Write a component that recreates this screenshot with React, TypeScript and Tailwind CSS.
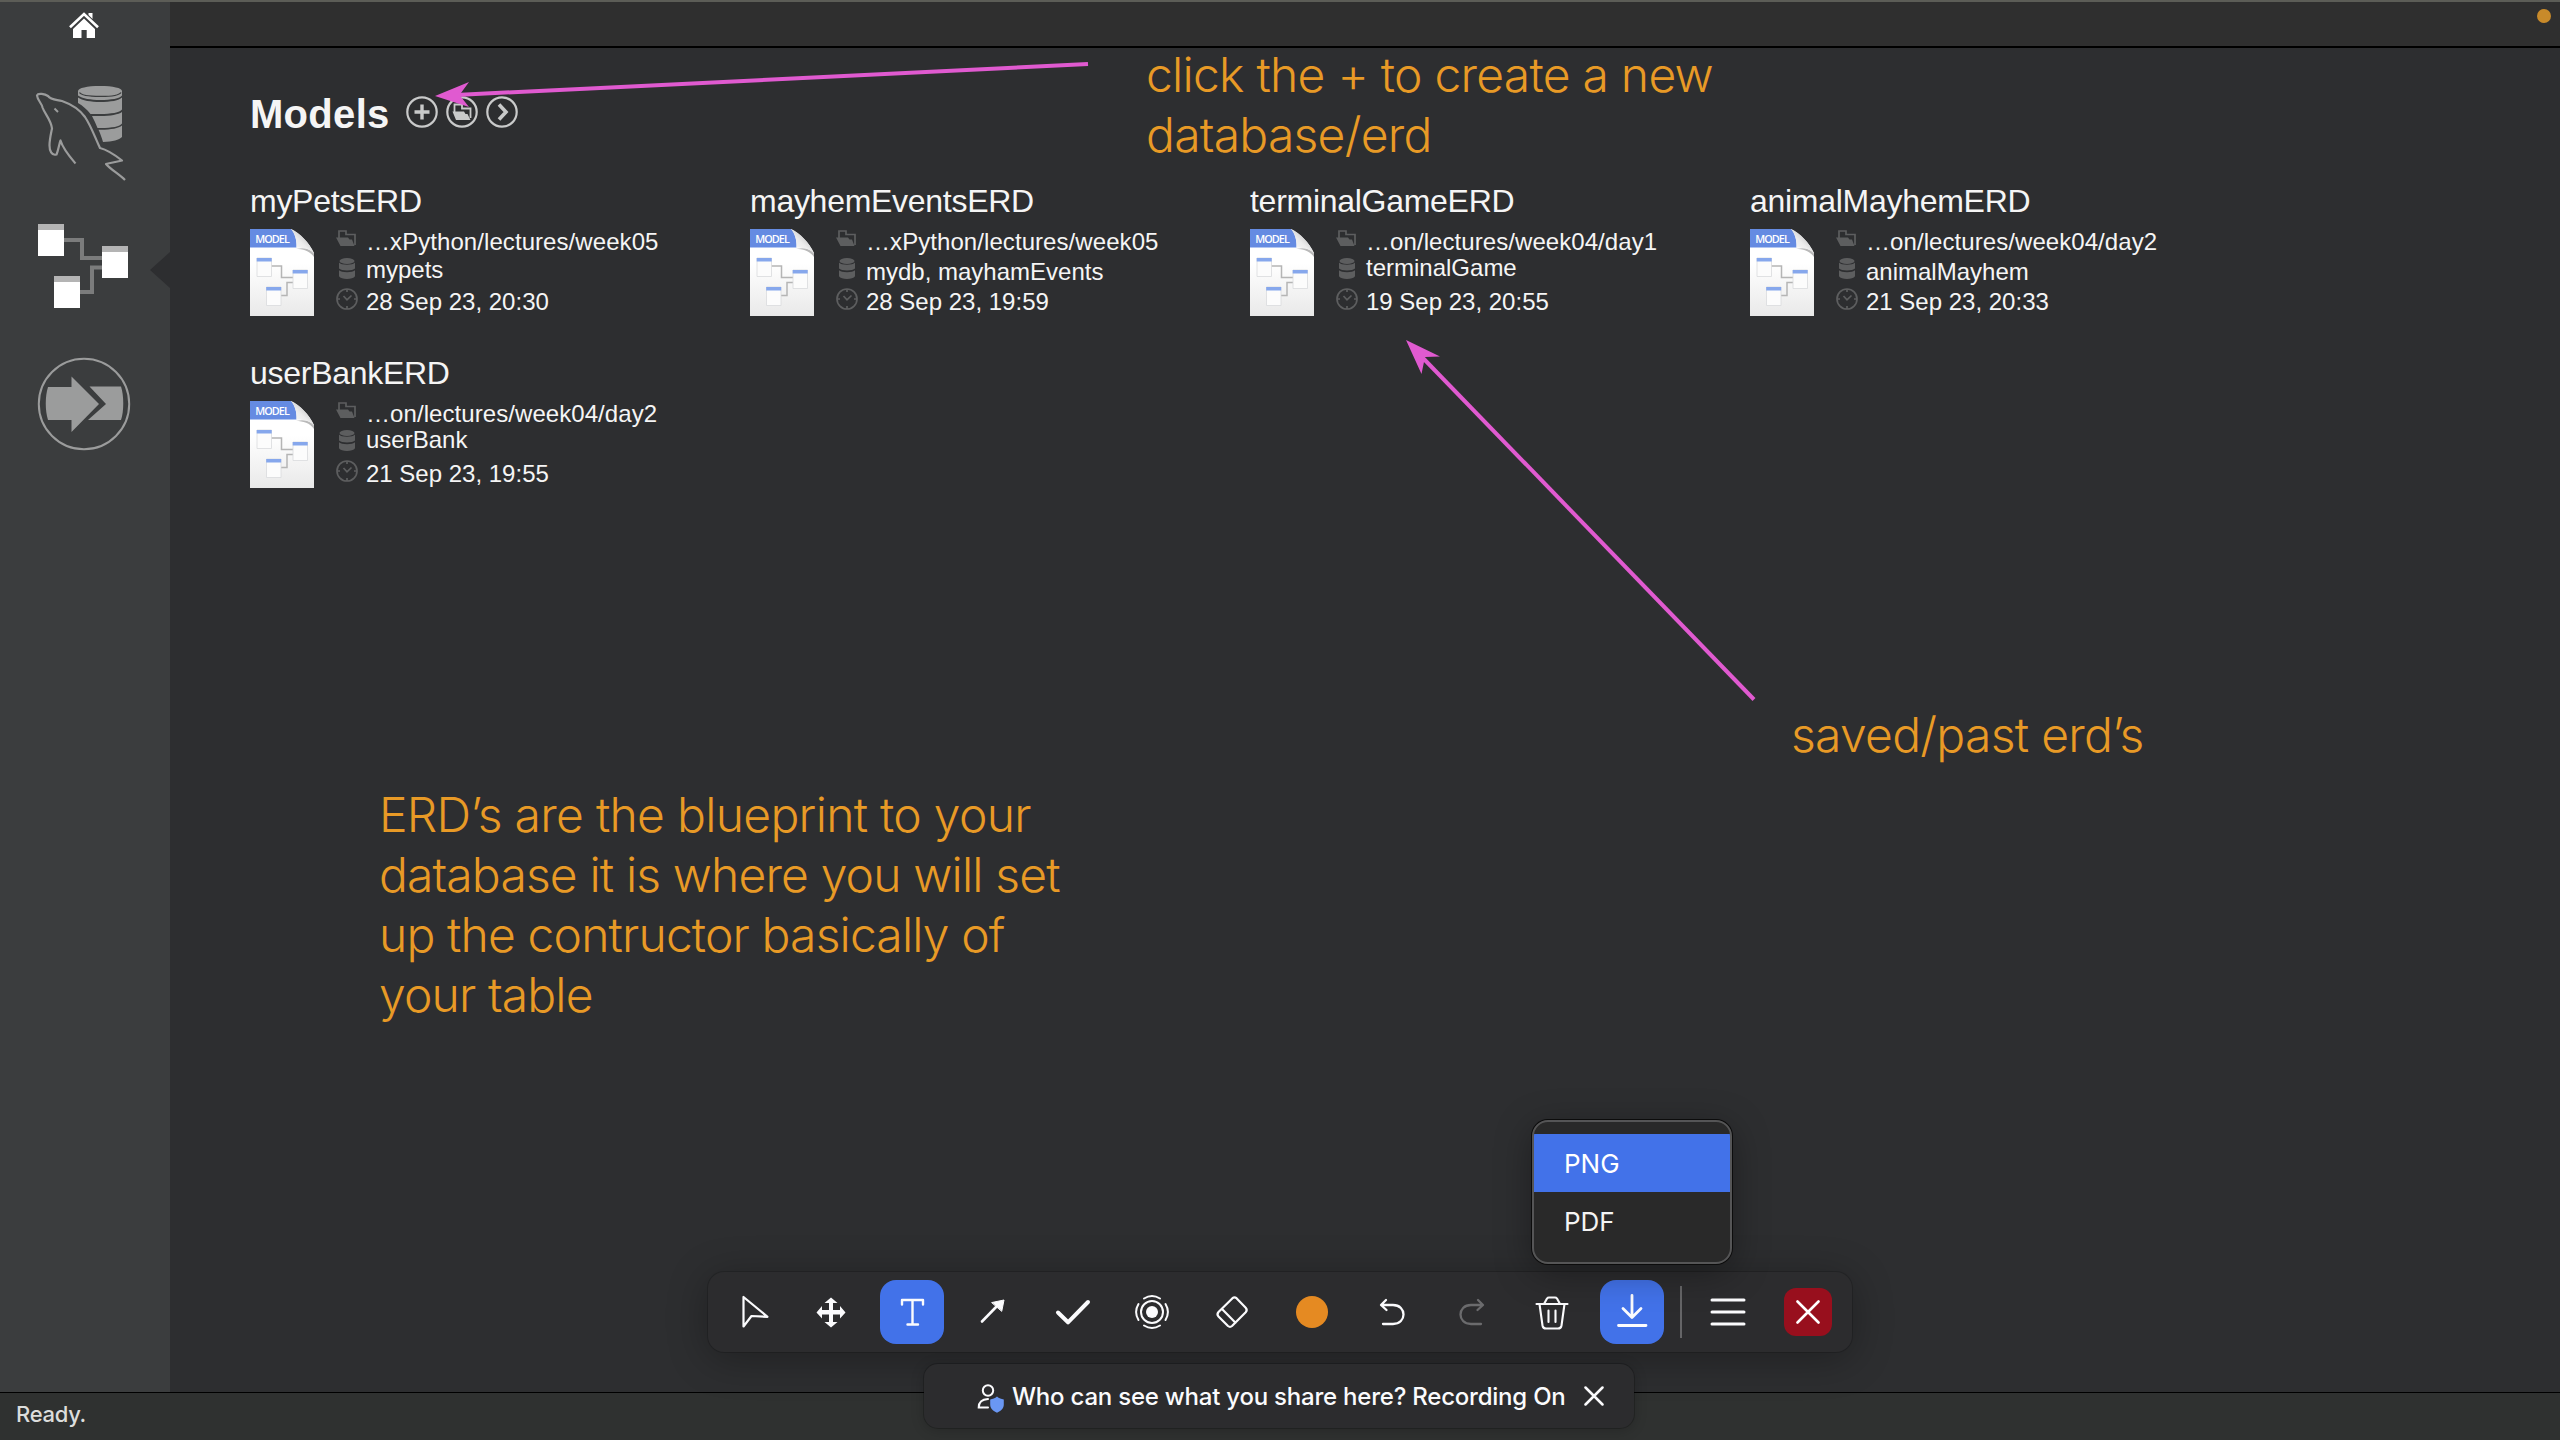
import type { ReactNode } from 'react';

type Model = { title: string; path: string; schema: string; offset: string; date: string };

const models: Model[] = [
  { title: 'myPetsERD', path: '…xPython/lectures/week05', schema: 'mypets', offset: 'pt-[3px]', date: '28 Sep 23, 20:30' },
  { title: 'mayhemEventsERD', path: '…xPython/lectures/week05', schema: 'mydb, mayhamEvents', offset: 'pt-[5px]', date: '28 Sep 23, 19:59' },
  { title: 'terminalGameERD', path: '…on/lectures/week04/day1', schema: 'terminalGame', offset: 'pt-px', date: '19 Sep 23, 20:55' },
  { title: 'animalMayhemERD', path: '…on/lectures/week04/day2', schema: 'animalMayhem', offset: 'pt-[5px]', date: '21 Sep 23, 20:33' },
  { title: 'userBankERD', path: '…on/lectures/week04/day2', schema: 'userBank', offset: 'pt-px', date: '21 Sep 23, 19:55' },
];

function HomeIcon() {
  return (
    <svg className="block h-[26px] w-[30px]" viewBox="69 12 30 26" fill="#fff">
      <path d="M88.500 13h4v6l-4-4z" />
      <path d="M70 27.200 84 14l14 13.200" fill="none" stroke="#fff" strokeWidth="2.600" />
      <path d="M84 18.600 95 29v9h-8.300v-8h-5.200v8H73v-9z" />
    </svg>
  );
}

function DolphinIcon() {
  return (
    <svg className="block h-24 w-[92px]" viewBox="35 85 92 96" fill="none">
      <g fill="#9b9c9c">
        <path d="M78 91c0-3 9-5 22-5s22 2 22 5v4.500c-2 3-11 4.500-22 4.500-9 0-18-1.500-22-4.500z" />
        <path d="M78 97.500c4 3 13 4.500 22 4.500 11 0 19-1.500 22-4.500v12c-2 3-11 4.500-22 4.500h-9.500c-3.500-4.500-7.500-8-12.500-11z" />
        <path d="M92 116h8.500c10 0 18-1.500 21.500-4v11.500c-2 3-10 4.500-21 4.500h-3.500c-1.500-4-3.500-8-5.500-12z" />
        <path d="M98.500 129.700c11 .3 20-1.200 23.500-4.200V137c-3 3-9 4.600-19 5-1.500-5-2.500-8-4.500-12.300z" />
      </g>
      <path d="M79.500 92.500c3 5 38 5.500 41.500 0" stroke="#3c3e3f" strokeWidth="1.300" />
      <path d="M75.500 163.500C70 157 63 149 60.500 140.500c-1.500 4-2 9-4 14-5 1.500-7-4-7-9 0-6 1.500-12 2.500-17-1-9-7-14-9.500-21-.5-4-5-7-5.500-12 1-3 8-1.500 11 .5 3 4 8 3.500 14 5 10 3.500 18 9 23 16 6 9 9 18 15 31 6 1.500 15 7 22 12.500-5 1.500-11 2-16 3.500 4 5 13 10 19 16" stroke="#9b9c9c" strokeWidth="2.200" strokeLinejoin="round" />
      <path d="M54.500 108.500 58 112" stroke="#9b9c9c" strokeWidth="2" />
    </svg>
  );
}

function SchemaIcon() {
  return (
    <svg className="block h-[84px] w-[90px]" viewBox="38 224 90 84" fill="none">
      <path d="M64 240h18v18h20M80 292h12v-24.500h10" stroke="#7b7c7c" strokeWidth="4" />
      <path d="M38 224h26v32H38zM102 246h26v32h-26zM54 276h26v32H54z" fill="#fff" />
      <path d="M38 224h26v6H38zM102 246h26v6h-26zM54 276h26v6H54z" fill="#b4b4b4" />
    </svg>
  );
}

function MigrationIcon() {
  return (
    <svg className="block size-[94px]" viewBox="37 357 94 94" fill="#9b9c9c">
      <circle cx="84" cy="404" r="45.200" fill="none" stroke="#9b9c9c" strokeWidth="2" />
      <path d="M48 387h23.500v-10.500L99 404l-27.500 28v-12H48c-3-9-3-24 0-33z" />
      <path d="M89.500 386.500h31.500c3 9 3 25 0 33.500H88l18-16z" />
    </svg>
  );
}

function DocumentIcon() {
  return (
    <svg className="block h-[87px] w-16" viewBox="0 0 64 87">
      <defs>
        <linearGradient id="page" x1="0" y1="0" x2="0" y2="1">
          <stop offset=".4" stopColor="#fff" />
          <stop offset="1" stopColor="#e9e9e9" />
        </linearGradient>
        <linearGradient id="curl" x1="0" y1="1" x2=".7" y2=".2">
          <stop offset="0" stopColor="#fff" />
          <stop offset=".6" stopColor="#ececec" />
          <stop offset="1" stopColor="#c4c4c4" />
        </linearGradient>
      </defs>
      <path d="M0 0h41c8 4 18 13 23 24v63H0z" fill="url(#page)" />
      <path d="M0 0h41c4 4 6 12 5.500 18.500H0z" fill="#658be2" />
      <path d="M46 20c7 0 14 2 18 8v-4c-4-4-10-6-18-4z" fill="#b9b9b9" />
      <path d="M41 0c9 4 19 14 23 25-3-4.500-9-6.500-17.500-6.500C47 12 45 4 41 0z" fill="url(#curl)" />
      <text x="5.300" y="13.600" textLength="34.500" fill="#fff" fontFamily="Open Sans, sans-serif" fontWeight="600" fontSize="10.800">MODEL</text>
      <path d="M21 37h10.500v11.500H43M31 66.500h6v-13h6" fill="none" stroke="#b5b5b5" strokeWidth="1.500" />
      <g fill="#fcfcfc" stroke="#d9dadd" strokeWidth=".8">
        <path d="M7 29h14.500v18.500H7zM43 41h14.500v18.500H43zM16.500 58h14.500v18.500H16.500z" />
      </g>
      <path d="M6.700 29h15v3.600h-15zM42.700 41h15v3.600h-15zM16.200 58h15v3.600h-15z" fill="#86a7ec" />
    </svg>
  );
}

function FolderIcon() {
  return (
    <svg className="mt-0.5 block h-4 w-5" viewBox="0 0 20 16">
      <path d="M3 8V1h7v3.500h9V15" fill="none" stroke="#5d5e5f" strokeWidth="1.700" />
      <path d="M0 7.500h12l1.500 2h2.500l2.500 6.500H4.500z" fill="#5d5e5f" />
    </svg>
  );
}

function DatabaseIcon() {
  return (
    <svg className="mt-[5px] ml-[3px] block h-[21px] w-4" viewBox="0 0 16 21" fill="#5d5e5f">
      <ellipse cx="8" cy="3" rx="7.500" ry="3" />
      <path d="M0 4.500c2 3 14 3 16 0v6c-2 2.600-14 2.600-16 0z" />
      <path d="M0 12.200c2 2.600 14 2.600 16 0v6c-2 3.600-14 3.600-16 0z" />
    </svg>
  );
}

function ClockIcon() {
  return (
    <svg className="block size-[22px]" viewBox="0 0 22 22" fill="none" stroke="#5d5e5f" strokeWidth="1.700">
      <circle cx="11" cy="11" r="10" />
      <path d="M11 1v3M11 18v3M1 11h3M18 11h3M7.500 8l3.500 3.800 4.500-4.300" />
    </svg>
  );
}

function ModelCard({ model }: { model: Model }) {
  return (
    <article className="h-[172px]">
      <h2 className="text-[32px] leading-9 tracking-[-0.28px]">{model.title}</h2>
      <div className="flex">
        <div className="w-[86px] pt-2.5">
          <DocumentIcon />
        </div>
        <div className="pt-[9px] text-2xl leading-7 whitespace-nowrap">
          <div className="flex h-[25px] tracking-[0.07px]">
            <div className="w-[30px]"><FolderIcon /></div>
            <span>{model.path}</span>
          </div>
          <div className="flex h-[35px]">
            <div className="w-[30px]"><DatabaseIcon /></div>
            <span className={model.offset}>{model.schema}</span>
          </div>
          <div className="flex h-7">
            <div className="w-[30px]"><ClockIcon /></div>
            <span>{model.date}</span>
          </div>
        </div>
      </div>
    </article>
  );
}

function RoundButton({ children }: { children: ReactNode }) {
  return (
    <button className="block size-8">
      <svg className="block size-8" viewBox="0 0 32 32" fill="none" stroke="#c9caca" strokeWidth="2.200">
        <circle cx="16" cy="16" r="14.700" />
        {children}
      </svg>
    </button>
  );
}

function Tool({ active = false, children }: { active?: boolean; children: ReactNode }) {
  return (
    <button className={`flex size-16 items-center justify-center rounded-2xl ${active ? 'bg-[#4272e9]' : ''}`}>
      <svg className="block size-16" viewBox="0 0 64 64" fill="none" stroke="#fbfbfd" strokeWidth="2.400" strokeLinecap="round" strokeLinejoin="round">
        {children}
      </svg>
    </button>
  );
}

function Toolbar() {
  return (
    <div className="absolute top-[1272px] left-[708px] flex h-20 w-[1144px] items-center rounded-2xl bg-[#2c2c2e] px-3 shadow-[0_0_0_1px_rgba(0,0,0,0.16),0_6px_40px_rgba(0,0,0,0.3)]">
      <div className="flex gap-4">
        <Tool><path d="M23.500 17v29.500l8-10.500 16 .8z" strokeWidth="2.200" /></Tool>
        <Tool>
          <g fill="#fbfbfd" stroke="none">
            <path d="M29 30V23h-4.500L31 17.500l6.500 5.500H33v7h7v-4l5.500 6.500L40 38.500v-4h-7v7.500h4.500L31 47.500 24.500 42H29v-7.500h-7v4l-5.500-6L22 26v4z" />
          </g>
        </Tool>
        <Tool active><path d="M22 24.500V20h21v4.500M32.500 20v24.500M27.500 44.500h10.500" /></Tool>
        <Tool>
          <path d="M22 41.500 39 24" strokeWidth="2.600" />
          <path d="M32 22.500 44 20l-2.200 11z" fill="#fbfbfd" strokeWidth="1" />
        </Tool>
        <Tool><path d="m18 32.500 10 9.800L48 22" strokeWidth="4" /></Tool>
        <Tool>
          <circle cx="32" cy="32" r="6" fill="#fbfbfd" stroke="none" />
          <circle cx="32" cy="32" r="11" strokeWidth="2" />
          <path d="M24 18.500a15.500 15.500 0 0 1 16 0M24 45.500a15.500 15.500 0 0 0 16 0M18.500 24a15.500 15.500 0 0 0 0 16M45.500 24a15.500 15.500 0 0 1 0 16" strokeWidth="2" />
        </Tool>
        <Tool>
          <path d="M32.500 18.200q2-1.700 4 0l9.200 9.600q2 2.200 0 4.400L32 46q-2 1.700-4 0l-9.500-9.600q-2-2.200 0-4.400zM22 29l13.500 13.800" strokeWidth="2.200" />
        </Tool>
        <Tool><circle cx="32" cy="32" r="16" fill="#e58a22" stroke="none" /></Tool>
        <Tool><path d="M26 20l-5 5 5.500 5M21.500 25H33c14 0 14 19 0 19H23" strokeWidth="2.300" /></Tool>
        <Tool><path d="M38 20l5 5-5.500 5M42.500 25H31c-14 0-14 19 0 19h10" stroke="#6b6b6d" strokeWidth="2.300" /></Tool>
        <Tool>
          <path d="M16.500 24h31M24 24l3-5.500q.7-1 2-1h6q1.300 0 2 1l3 5.500M19.500 24l3 21.500q.5 3 3.500 3h12q3 0 3.500-3l3-21.500M28.500 30.500v11.500M35.500 30.500v11.500" strokeWidth="2.100" />
        </Tool>
        <Tool active><path d="M32 15.500v22M23 28.500l9 9 9-9M18.500 45.500h27.500" strokeWidth="2.800" /></Tool>
      </div>
      <div className="mx-4 h-[52px] w-0.5 bg-[#656567]" />
      <div className="-ml-0.5 flex gap-4">
        <Tool><path d="M16 20h32M16 32h32M16 44h32" strokeWidth="3" /></Tool>
        <button className="m-2 flex size-12 items-center justify-center rounded-xl bg-[#980f1d]">
          <svg className="block size-6" viewBox="0 0 24 24" stroke="#fff" strokeWidth="2.600" strokeLinecap="round">
            <path d="m1.500 1.500 21 21M22.500 1.500l-21 21" />
          </svg>
        </button>
      </div>
    </div>
  );
}

function ExportMenu() {
  return (
    <div className="absolute top-[1120px] left-[1532px] h-36 w-[200px] overflow-hidden rounded-2xl border-2 border-[#555556] bg-[#292929] pt-3 text-[26px] leading-[60px] text-[#f4f4f4] shadow-[0_0_0_1px_#0c0c0c,0_8px_36px_rgba(0,0,0,0.35)]">
      <div className="h-[58px] bg-[#4272e9] pl-[30px] text-white">PNG</div>
      <div className="h-[58px] pl-[30px]">PDF</div>
    </div>
  );
}

function ShareNotice() {
  return (
    <div className="absolute top-[1364px] left-[924px] flex h-16 w-[710px] items-center rounded-[14px] bg-[#2c2c2e] pl-[52px] shadow-[0_0_0_1px_rgba(0,0,0,0.2),0_2px_14px_rgba(0,0,0,0.2)]">
      <svg className="mt-1 block h-[30px] w-7" viewBox="0 0 28 30" fill="none">
        <circle cx="12" cy="7.500" r="5.200" stroke="#fbfbfd" strokeWidth="2" />
        <path d="M12 16c-6 .3-9.300 3.500-9.300 8.500H12" stroke="#fbfbfd" strokeWidth="2" strokeLinecap="round" />
        <path d="M21 13.500c2 1.800 4.300 2.600 6.800 3v5c0 4-3 6.700-6.800 8.200-3.800-1.500-6.800-4.200-6.800-8.200v-5c2.500-.4 4.800-1.200 6.800-3z" fill="#6a97f3" />
      </svg>
      <span className="ml-2 w-[572px] pt-0.5 text-2xl font-medium tracking-[-0.22px] whitespace-nowrap text-[#fbfbfd]">Who can see what you share here? Recording On</span>
      <svg className="block size-5" viewBox="0 0 20 20" stroke="#fbfbfd" strokeWidth="2.500" strokeLinecap="round">
        <path d="m1.500 1.500 17 17M18.500 1.500l-17 17" />
      </svg>
    </div>
  );
}

function Annotations() {
  return (
    <div className="text-5xl leading-[60px]! font-light whitespace-nowrap text-[#e89a26]">
      <svg className="absolute top-0 left-0 block h-[720px] w-[1800px]" viewBox="0 0 1800 720">
        <g stroke="#e05ad0" strokeWidth="4">
          <path d="M456 95 1088 64" />
          <path d="M1421 356 1754 699.500" />
        </g>
        <g fill="#e05ad0">
          <path d="M435 96 469 82l-9.500 13 9.500 12z" />
          <path d="m1406 340 34 16.500-15 .5-3.500 17z" />
        </g>
      </svg>
      <p className="absolute top-[45px] left-[1146px] tracking-[-0.74px]">click the + to create a new<br />database/erd</p>
      <p className="absolute top-[705px] left-[1791px] tracking-[-0.7px]">saved/past erd’s</p>
      <p className="absolute top-[785px] left-[379px] tracking-[-0.85px]"><span className="tracking-[-0.7px]">ERD’s are the blueprint to your</span><br />database it is where you will set<br />up the contructor basically of<br />your table</p>
    </div>
  );
}

export default function App() {
  return (
    <div className="relative flex h-[1440px] w-[2560px] flex-col overflow-hidden border-t-2 border-[#5c5d57] bg-[#2d2e30] font-['Inter',sans-serif]">
      <div className="flex h-[1390px]">
        <aside className="relative flex w-[170px] shrink-0 flex-col bg-[#3b3d3e]">
          <div className="mt-2.5 ml-[69px]"><HomeIcon /></div>
          <div className="mt-[47px] ml-[35px]"><DolphinIcon /></div>
          <div className="mt-[43px] ml-[38px]"><SchemaIcon /></div>
          <div className="mt-[49px] ml-[37px]"><MigrationIcon /></div>
          <svg className="absolute top-[250px] right-0 block h-9 w-5" viewBox="0 0 20 36"><path d="M20 0v36L0 18z" fill="#2d2e30" /></svg>
        </aside>
        <main className="flex grow flex-col font-['Liberation_Sans',sans-serif] text-[#f5f5f5]">
          <header className="flex h-[46px] shrink-0 justify-end border-b-2 border-black bg-[#2f2f2f] pt-[7px] pr-[9px]">
            <div className="size-3.5 rounded-full bg-[#c88a2a]" />
          </header>
          <div className="mt-[42px] flex h-12 items-center pl-20">
            <h1 className="w-[156px] text-[40px] leading-[48px] font-bold tracking-[0.3px]">Models</h1>
            <div className="mb-1 flex gap-2">
              <RoundButton><path d="M16 8.500v15M8.500 16h15" strokeWidth="3.400" /></RoundButton>
              <RoundButton>
                <path d="M8.500 17V8.500h7.500v4h8.500V22" strokeWidth="1.800" />
                <path d="M6.500 15.500H18l1.500 2.500h2l3 6H10z" fill="#c9caca" stroke="none" />
              </RoundButton>
              <RoundButton><path d="m13 8.500 7 7.500-7 7.500" strokeWidth="3.600" /></RoundButton>
            </div>
          </div>
          <section className="mt-[45px] grid grid-cols-[repeat(4,500px)] pl-20">
            {models.map((model) => (
              <ModelCard key={model.title} model={model} />
            ))}
          </section>
        </main>
      </div>
      <footer className="h-12 border-t border-black bg-[#2f3130] pt-[5px] pl-4 text-[22px] leading-8 font-medium tracking-[-0.3px] text-[#dcdddc]">Ready.</footer>
      <div className="absolute -top-0.5 left-0">
        <Annotations />
        <Toolbar />
        <ShareNotice />
        <ExportMenu />
      </div>
    </div>
  );
}
